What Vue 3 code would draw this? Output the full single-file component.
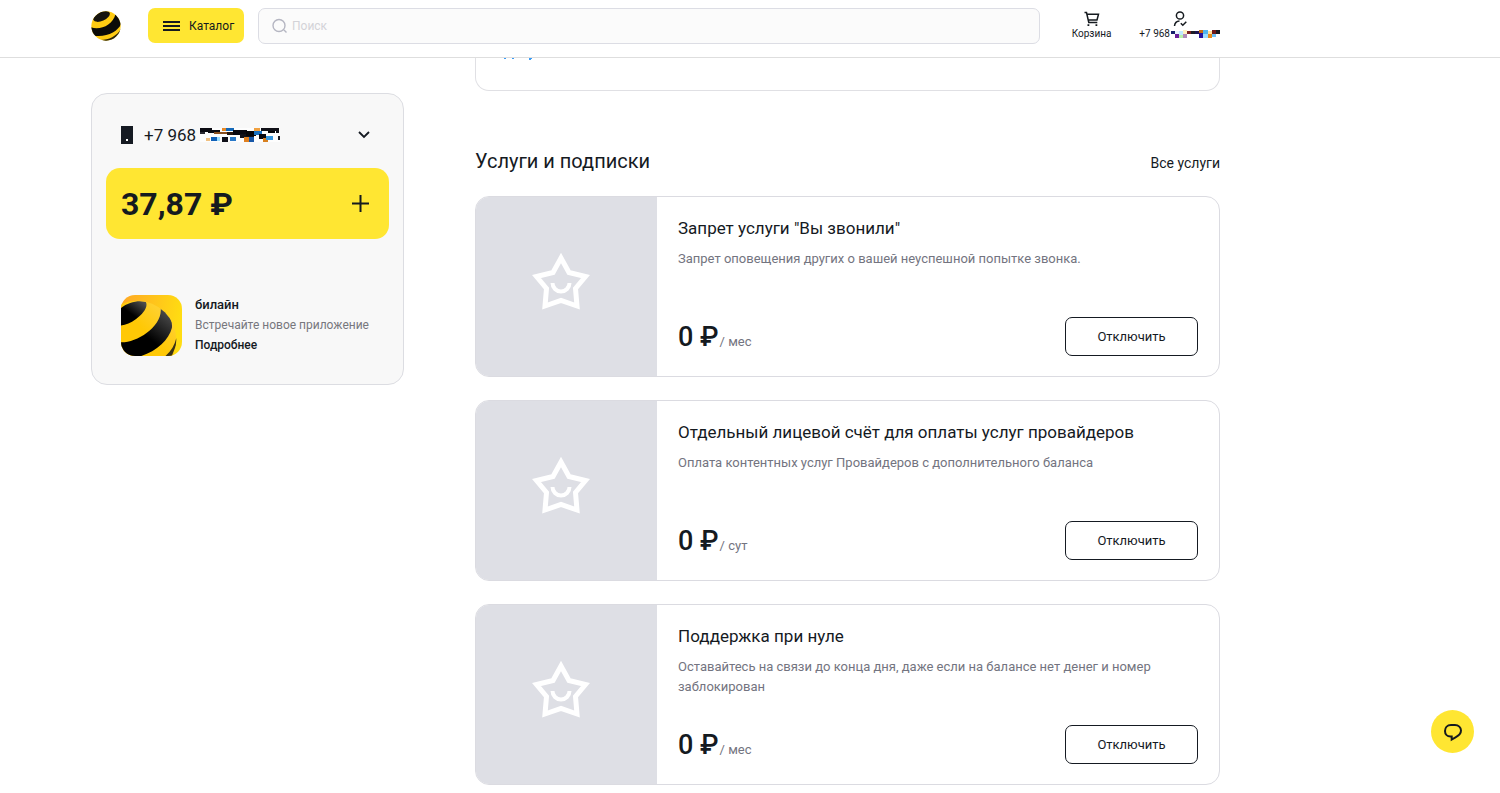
<script setup>
const services = [
  {
    title: 'Запрет услуги "Вы звонили"',
    text: 'Запрет оповещения других о вашей неуспешной попытке звонка.',
    period: 'мес',
  },
  {
    title: 'Отдельный лицевой счёт для оплаты услуг провайдеров',
    text: 'Оплата контентных услуг Провайдеров с дополнительного баланса',
    period: 'сут',
  },
  {
    title: 'Поддержка при нуле',
    text: 'Оставайтесь на связи до конца дня, даже если на балансе нет денег и номер заблокирован',
    period: 'мес',
  },
]

// Mosaic cells that hide the private digits: [x, y, width, height, colour]
const headerMask = [
  [0, 1, 4, 3, '#16206b'], [4, 4, 4, 4, '#6a1f9a'], [8, 1, 4, 4, '#bfe9ff'], [4, 1, 4, 3, '#e8f4ff'],
  [8, 5, 4, 3, '#b8f0a8'], [12, 0, 4, 4, '#fff0c0'], [12, 4, 4, 4, '#b08ab8'], [16, 1, 4, 3, '#7a2020'],
  [20, 1, 8, 3, '#1c1c24'], [24, 1, 5, 3, '#1d1550'], [28, 0, 4, 3, '#c86a10'], [28, 3, 4, 5, '#26109a'],
  [32, 0, 5, 4, '#4fb4f0'], [32, 4, 5, 4, '#9adcff'], [37, 1, 4, 3, '#ffe0a0'], [37, 4, 4, 4, '#e88a18'],
  [41, 0, 4, 4, '#701818'], [41, 4, 4, 3, '#6cc0f8'], [45, 0, 4, 4, '#181820'],
]
const sideMask = [
  [0, 0, 80, 14, '#fdfdfd'], [0, 0, 12, 4, '#0b0b12'], [0, 4, 5, 2, '#2b2b33'], [8, 2, 12, 3, '#0b0b12'],
  [14, 4, 14, 2, '#8a5020'], [6, 10, 4, 3, '#f0c080'], [11, 9, 6, 4, '#1060b8'], [17, 9, 3, 4, '#9adcff'],
  [22, 0, 4, 3, '#e88a28'], [26, 0, 8, 3, '#1468b8'], [22, 9, 6, 5, '#101018'], [27, 4, 8, 3, '#281810'],
  [30, 9, 6, 4, '#2878c8'], [33, 2, 14, 5, '#080810'], [40, 6, 14, 4, '#101018'], [46, 3, 10, 5, '#050508'],
  [44, 9, 5, 5, '#e08020'], [49, 9, 5, 5, '#1858a8'], [54, 0, 6, 3, '#f0a040'], [54, 3, 8, 4, '#1870c0'],
  [61, 0, 18, 3, '#101018'], [59, 6, 7, 5, '#080810'], [63, 10, 5, 4, '#d88020'], [68, 3, 7, 2, '#050508'],
  [66, 8, 7, 4, '#3898e0'], [76, 0, 3, 5, '#101018'], [78, 8, 2, 4, '#181820'],
]
</script>

<template>
  <div class="page">
    <header class="header">
      <a class="logo" href="#" aria-label="билайн">
        <svg viewBox="0 0 88 88" width="30" height="30" aria-hidden="true">
          <defs>
            <clipPath id="ball"><circle cx="44" cy="44" r="43" /></clipPath>
          </defs>
          <g clip-path="url(#ball)">
            <rect width="88" height="88" fill="#ffcb12" />
            <ellipse cx="31" cy="16" rx="26" ry="13" transform="rotate(-24 31 16)" fill="#17150f" />
            <path d="M-2 47C24 57 64 44 72 8L90 30C88 56 48 80 6 72Z" fill="#0c0b08" />
            <path d="M18 84C46 88 76 76 90 48L92 90H20Z" fill="#29240f" />
          </g>
        </svg>
      </a>
      <button class="catalog" type="button">
        <svg viewBox="0 0 17 10" width="17" height="10" aria-hidden="true">
          <path d="M0 1h17M0 5h17M0 9h17" stroke="#151a1f" stroke-width="2" />
        </svg>
        <span>Каталог</span>
      </button>
      <label class="search">
        <svg viewBox="0 0 16 16" width="16" height="16" aria-hidden="true">
          <path d="M12 12l2.500 2.500M13 7.500a6 6 0 1 1-12 0 6 6 0 0 1 12 0z" fill="none" stroke="#b5b6c2" stroke-width="1.400" />
        </svg>
        <input type="search" placeholder="Поиск" aria-label="Поиск" />
      </label>
      <a class="shortcut" href="#">
        <svg viewBox="0 0 16 16" width="16" height="16" aria-hidden="true">
          <path d="M0.500 1.500h2l2.300 10h8.500M3.200 3.200h11.300L13 9H4.500" fill="none" stroke="#151a1f" stroke-width="1.500" />
          <path d="M3.500 14.200h1.800M11.500 14.200h1.800" stroke="#151a1f" stroke-width="1.800" />
        </svg>
        <span>Корзина</span>
      </a>
      <a class="shortcut profile" href="#">
        <svg viewBox="0 0 16 16" width="16" height="16" aria-hidden="true">
          <circle cx="8" cy="4.500" r="3.600" fill="none" stroke="#151a1f" stroke-width="1.500" />
          <path d="M2.500 15c.3-3 1.800-4.800 5-5M8.800 12.300l2 2 3.500-3.500" fill="none" stroke="#151a1f" stroke-width="1.500" />
        </svg>
        <span class="masked">
          +7 968
          <svg viewBox="0 0 49 8" width="49" height="8" shape-rendering="crispEdges" aria-hidden="true">
            <rect v-for="(c, i) in headerMask" :key="i" :x="c[0]" :y="c[1]" :width="c[2]" :height="c[3]" :fill="c[4]" />
          </svg>
        </span>
      </a>
    </header>

    <div class="content">
      <aside class="side">
        <button class="number" type="button">
          <svg viewBox="0 0 12 18" width="12" height="18" aria-hidden="true">
            <path d="M0 0h12v18H0z" fill="#151a22" />
            <path d="M5 13h2v2H5z" fill="#fff" />
          </svg>
          <span>+7 968</span>
          <svg viewBox="0 0 80 14" width="80" height="14" shape-rendering="crispEdges" aria-hidden="true">
            <rect v-for="(c, i) in sideMask" :key="i" :x="c[0]" :y="c[1]" :width="c[2]" :height="c[3]" :fill="c[4]" />
          </svg>
          <svg class="chevron" viewBox="0 0 12 8" width="12" height="8" aria-hidden="true">
            <path d="M1 1l5 5 5-5" fill="none" stroke="#151a22" stroke-width="1.800" />
          </svg>
        </button>
        <button class="balance" type="button" aria-label="Пополнить баланс">
          <span>37,87 ₽</span>
          <svg viewBox="0 0 17 17" width="17" height="17" aria-hidden="true">
            <path d="M8.500 0v17M0 8.500h17" stroke="#151a1f" stroke-width="2" />
          </svg>
        </button>
        <div class="promo">
          <svg class="app" viewBox="0 0 182 182" width="61" height="61" aria-hidden="true">
            <defs>
              <linearGradient id="tile" x1="0" y1="0" x2="1" y2="0.200">
                <stop offset="0" stop-color="#ffa726" />
                <stop offset="1" stop-color="#ffdc12" />
              </linearGradient>
              <linearGradient id="dark" x1="0" y1="1" x2="0.800" y2="0">
                <stop offset="0.500" stop-color="#000" />
                <stop offset="1" stop-color="#4c4c4c" />
              </linearGradient>
              <linearGradient id="light" x1="0" y1="1" x2="1" y2="0">
                <stop offset="0.400" stop-color="#ffc805" />
                <stop offset="1" stop-color="#ffd95a" />
              </linearGradient>
              <clipPath id="sphere"><circle cx="48" cy="134" r="117" /></clipPath>
            </defs>
            <rect width="182" height="182" fill="url(#tile)" />
            <g clip-path="url(#sphere)">
              <rect width="182" height="182" fill="url(#light)" />
              <path d="M-4 42C18 22 52 14 74 21C82 34 66 57 44 72C28 84 12 90-4 91Z" fill="url(#dark)" />
              <path d="M-4 141C42 146 128 94 118 35C142 47 154 70 152 98C142 138 98 176 44 186H-4Z" fill="url(#dark)" />
              <path d="M165 128C160 150 148 170 128 186H150L172 130Z" fill="#3a3215" />
            </g>
          </svg>
          <div class="promo-text">
            <strong>билайн</strong>
            <span>Встречайте новое приложение</span>
            <a href="#">Подробнее</a>
          </div>
        </div>
      </aside>

      <main class="main">
        <div class="previous">
          <svg viewBox="0 0 28 2" width="28" height="2" aria-hidden="true">
            <path d="M0 0h2v1H0zM8 0h2v1H8zM25 0h3v1h-1v1h-2z" fill="#3b9cf5" />
          </svg>
        </div>
        <div class="heading">
          <h2>Услуги и подписки</h2>
          <a href="#">Все услуги</a>
        </div>
        <article v-for="s in services" :key="s.title" class="card">
          <div class="cover">
            <svg viewBox="0 0 60 60" width="60" height="60" aria-hidden="true">
              <path d="M30 6L38 20.500L54.500 24.500L44.500 36.500L46 54L30 48.500L14 54L15.500 36.500L5.500 24.500L22 20.500Z" fill="none" stroke="#fff" stroke-width="5" />
              <path d="M21.500 31a8.500 8.500 0 0 0 17 0" fill="none" stroke="#fff" stroke-width="4" />
            </svg>
          </div>
          <div class="body">
            <h3>{{ s.title }}</h3>
            <p>{{ s.text }}</p>
            <div class="foot">
              <div class="price"><b>0 ₽</b><span>/ {{ s.period }}</span></div>
              <button type="button">Отключить</button>
            </div>
          </div>
        </article>
      </main>
    </div>

    <button class="chat" type="button" aria-label="Чат">
      <svg viewBox="0 0 20 20" width="20" height="20" aria-hidden="true">
        <path d="M8.700 14.600H7.500C4 14.600 2 12 2 9s2-6 6-6h4c3.500 0 6 2.500 6 5.500 0 3-3 5.500-5.500 6.800L8.700 17.500z" fill="none" stroke="#151a1f" stroke-width="2" />
      </svg>
    </button>
  </div>
</template>

<style>
body {
  margin: 0;
  background: #fff;
}
</style>

<style scoped>
.page {
  height: 100vh;
  overflow: hidden;
  font-family: Roboto, "Liberation Sans", sans-serif;
  color: #151a1f;
}
.page *,
.page {
  box-sizing: border-box;
}
button,
input {
  font: inherit;
  color: inherit;
  border: 0;
  padding: 0;
  background: none;
}
button {
  cursor: pointer;
}
a {
  color: inherit;
  text-decoration: none;
}
svg {
  display: block;
  flex: none;
}
.header {
  display: flex;
  align-items: flex-start;
  height: 58px;
  padding: 8px 280px 0 91px;
  border-bottom: 1px solid #dedede;
}
.logo {
  margin: 3px 27px 0 0;
}
.catalog {
  display: flex;
  align-items: center;
  gap: 9px;
  flex: none;
  width: 96px;
  height: 35px;
  padding-left: 15px;
  border-radius: 7px;
  background: #ffe632;
  font-size: 12px;
}
.search {
  display: flex;
  align-items: center;
  gap: 4px;
  flex: 1;
  height: 36px;
  margin: 0 32px 0 14px;
  padding: 0 13px;
  border: 1px solid #dcdde4;
  border-radius: 7px;
  background: #fbfbfb;
}
.search input {
  flex: 1;
  min-width: 0;
  outline: 0;
  font-size: 12px;
}
.search input::placeholder {
  color: #d3d3d8;
  opacity: 1;
}
.shortcut {
  display: flex;
  flex-direction: column;
  align-items: center;
  gap: 1px;
  padding-top: 3px;
  font-size: 10px;
  line-height: 12px;
}
.profile {
  margin-left: 28px;
}
.masked {
  display: flex;
  align-items: center;
  gap: 1px;
}
.content {
  display: grid;
  grid-template-columns: 313px minmax(0, 1fr);
  gap: 71px;
  align-items: start;
  padding: 0 280px 0 91px;
}
.side {
  margin-top: 35px;
  padding: 22px 14px 28px;
  border: 1px solid #dcdde2;
  border-radius: 16px;
  background: #f8f8f8;
}
.number {
  display: flex;
  align-items: center;
  width: 100%;
  height: 37px;
  padding: 0 19px 0 15px;
  font-size: 17px;
}
.number span {
  margin: 0 4px 0 11px;
}
.chevron {
  margin-left: auto;
}
.balance {
  display: flex;
  align-items: center;
  justify-content: space-between;
  width: 100%;
  height: 71px;
  margin-top: 15px;
  padding: 0 20px 0 15px;
  border-radius: 14px;
  background: #ffe632;
  font-size: 32px;
  font-weight: 700;
}
.promo {
  display: flex;
  gap: 13px;
  margin-top: 56px;
  padding-left: 15px;
}
.app {
  border-radius: 14px;
}
.promo-text {
  display: flex;
  flex-direction: column;
  font-size: 12px;
  line-height: 20px;
}
.promo-text strong,
.promo-text a {
  font-weight: 500;
}
.promo-text strong {
  font-size: 13px;
}
.promo-text span {
  color: #77777d;
}
.previous {
  height: 33px;
  padding-left: 28px;
  border: 1px solid #e0e0e4;
  border-top: 0;
  border-radius: 0 0 14px 14px;
}
.heading {
  display: flex;
  align-items: center;
  justify-content: space-between;
  height: 24px;
  margin: 58px 0 23px;
}
.heading h2 {
  margin: 0;
  font-size: 20px;
  font-weight: 400;
}
.heading a {
  padding-top: 4px;
  font-size: 14px;
}
.card {
  display: flex;
  min-height: 181px;
  margin-bottom: 23px;
  border: 1px solid #dbdbe1;
  border-radius: 14px;
  overflow: hidden;
}
.cover {
  display: grid;
  place-items: center;
  flex: none;
  width: 181px;
  padding: 0 12px 10px 0;
  background: #dedfe5;
}
.body {
  display: flex;
  flex-direction: column;
  flex: 1;
  padding: 20px 21px;
}
h3 {
  margin: 0;
  font-size: 17px;
  font-weight: 400;
  line-height: 22px;
}
p {
  margin: 10px 0 0;
  color: #737480;
  font-size: 13px;
  line-height: 20px;
}
.foot {
  display: flex;
  align-items: center;
  justify-content: space-between;
  margin-top: auto;
}
.price {
  display: flex;
  align-items: baseline;
  gap: 1px;
}
.price b {
  font-size: 27px;
  font-weight: 500;
}
.price span {
  color: #737480;
  font-size: 13px;
}
.foot button {
  width: 133px;
  height: 39px;
  border: 1px solid #151a22;
  border-radius: 7px;
  font-size: 13px;
}
.chat {
  position: fixed;
  right: 26px;
  bottom: 40px;
  display: grid;
  place-items: center;
  width: 43px;
  height: 43px;
  border-radius: 50%;
  background: #ffe632;
}
</style>
